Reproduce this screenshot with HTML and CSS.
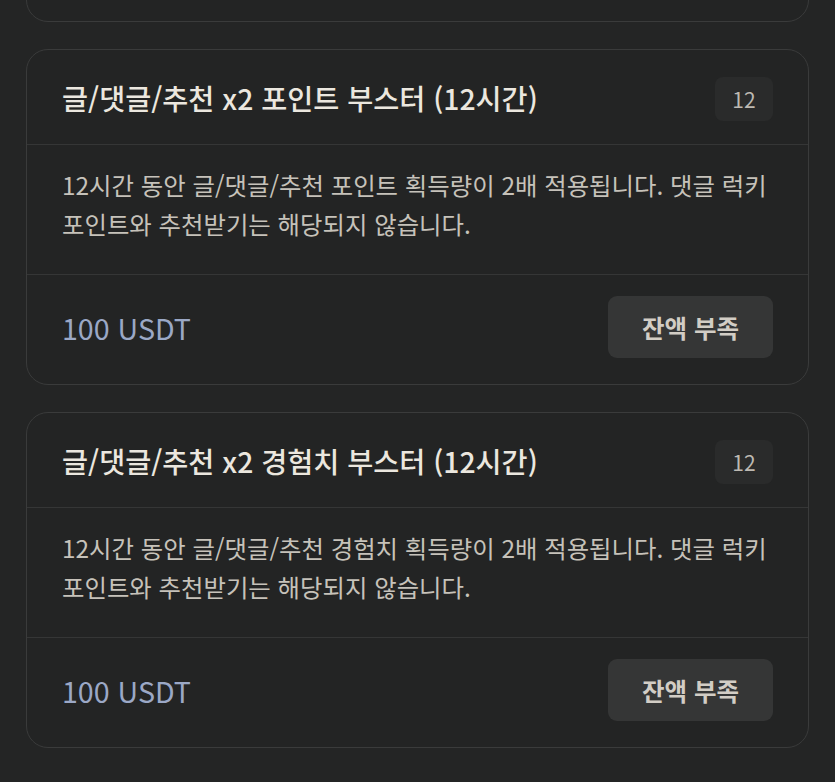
FILE: index.html
```html
<!DOCTYPE html>
<html lang="ko">
<head>
<meta charset="utf-8">
<link rel="stylesheet" href="styles.css">
</head>
<body>
<div class="list">
  <section class="card card-top"></section>
  <section class="card">
    <div class="card-head">
      <h2 class="title">글/댓글/추천 x2 포인트 부스터 (12시간)</h2>
      <span class="badge">12</span>
    </div>
    <p class="desc">12시간 동안 글/댓글/추천 포인트 획득량이 2배 적용됩니다. 댓글 럭키 포인트와 추천받기는 해당되지 않습니다.</p>
    <div class="card-foot">
      <span class="price">100 USDT</span>
      <button class="btn">잔액 부족</button>
    </div>
  </section>
  <section class="card">
    <div class="card-head">
      <h2 class="title">글/댓글/추천 x2 경험치 부스터 (12시간)</h2>
      <span class="badge">12</span>
    </div>
    <p class="desc">12시간 동안 글/댓글/추천 경험치 획득량이 2배 적용됩니다. 댓글 럭키 포인트와 추천받기는 해당되지 않습니다.</p>
    <div class="card-foot">
      <span class="price">100 USDT</span>
      <button class="btn">잔액 부족</button>
    </div>
  </section>
</div>
</body>
</html>
```
FILE: styles.css
```css
html, body {
  margin: 0;
  padding: 0;
  background: #242525;
}
body {
  font-family: "Noto Sans CJK KR", "Noto Sans", sans-serif;
  color: #e8e4dc;
  height: 782px;
  overflow: hidden;
}
.list {
  display: flex;
  flex-direction: column;
  gap: 27px;
  padding: 0 26px 0 26px;
  width: 783px;
}
.card {
  border: 1px solid #3a3b3b;
  border-radius: 22px;
  background: #232424;
  display: flex;
  flex-direction: column;
  height: 336px;
  box-sizing: border-box;
}
.card-top {
  height: 60px;
  margin-top: -38px;
}
.card-head {
  height: 95px;
  box-sizing: border-box;
  display: flex;
  align-items: center;
  justify-content: space-between;
  padding: 3px 35px 0 35px;
  border-bottom: 1px solid #353636;
}
.title {
  margin: 0;
  font-size: 28.3px;
  font-weight: 500;
  color: #ebe7df;
  line-height: 1;
}
.badge {
  width: 58px;
  height: 44px;
  border-radius: 8px;
  background: #2a2b2b;
  color: #bdb9b2;
  font-size: 21px;
  display: flex;
  align-items: center;
  justify-content: center;
  margin-top: 1px;
}
.desc {
  margin: 0;
  height: 130px;
  box-sizing: border-box;
  padding: 20px 35px 0 35px;
  font-size: 24.4px;
  line-height: 39px;
  color: #c6c2ba;
  word-break: keep-all;
  border-bottom: 1px solid #353636;
}
.card-foot {
  flex: 1;
  display: flex;
  align-items: center;
  justify-content: space-between;
  padding: 0 35px 5px 35px;
}
.price {
  font-size: 28.6px;
  color: #9ba8c6;
}
.btn {
  width: 165px;
  height: 62px;
  border: none;
  border-radius: 9px;
  background: #353636;
  color: #d2cdc5;
  font-family: "Noto Sans CJK KR", "Noto Sans", sans-serif;
  font-size: 24.5px;
  font-weight: 700;
}
```
